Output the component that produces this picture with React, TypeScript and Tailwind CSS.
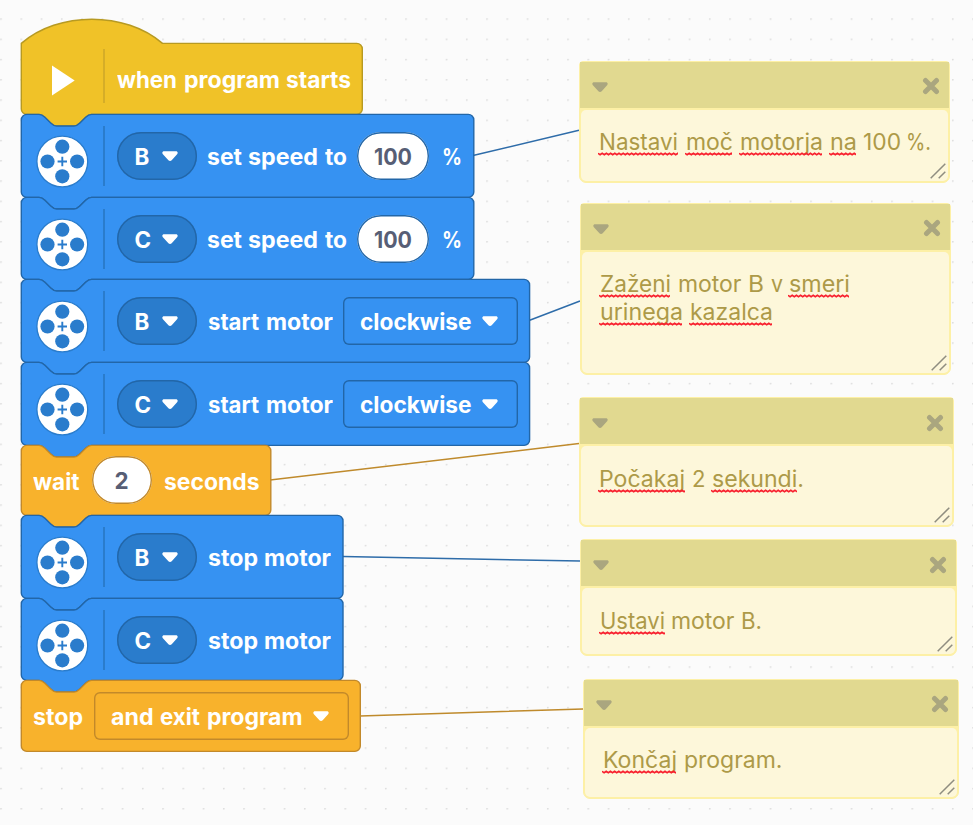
import { useLayoutEffect, useRef, type ReactNode } from "react";

const STEP = 20.25;

type WordSpec = { text: string; width: number; gap?: number; misspelt?: number };

/* A word set to an exact advance width by widening or narrowing its glyphs. */
function Word({ text, width, gap = 0, misspelt }: WordSpec) {
  const ref = useRef<HTMLSpanElement>(null);
  useLayoutEffect(() => {
    const el = ref.current;
    if (!el) return;
    el.style.transform = "none";
    const natural = el.getBoundingClientRect().width;
    el.style.transform = `scaleX(${width / natural})`;
  }, [text, width]);
  return (
    <span className="relative block shrink-0 whitespace-nowrap" style={{ width, marginLeft: gap }}>
      <span ref={ref} className="inline-block origin-left">{text}</span>
      {misspelt ? (
        <svg className="absolute -left-px bottom-0 block" width={misspelt} height="4">
          <path d={squiggle(misspelt)} fill="none" stroke="#f8202e" strokeWidth="1.6" />
        </svg>
      ) : null}
    </span>
  );
}

function squiggle(width: number) {
  let d = "M0 1.3";
  for (let x = 0; x <= width; x += 4.2) d += "l2.1 1.4l2.1 -1.4";
  return d;
}

function Words({ items, className = "" }: { items: WordSpec[]; className?: string }) {
  return (
    <div className={`flex shrink-0 ${className}`}>
      {items.map((w) => <Word key={w.text} {...w} />)}
    </div>
  );
}

const NOTCH = "c2.9 0 4.35 1.45 5.8 2.9l5.8 5.8c1.45 1.45 2.9 2.9 5.8 2.9h17.6c2.9 0 4.35 -1.45 5.8 -2.9l5.8 -5.8c1.45 -1.45 2.9 -2.9 5.8 -2.9";
const TAB = "c-2.9 0 -4.35 1.45 -5.8 2.9l-5.8 5.8c-1.45 1.45 -2.9 2.9 -5.8 2.9h-17.6c-2.9 0 -4.35 -1.45 -5.8 -2.9l-5.8 -5.8c-1.45 -1.45 -2.9 -2.9 -5.8 -2.9";

type Kind = "hat" | "motor" | "control" | "end";

const PAINT: Record<Kind, { fill: string; stroke: string }> = {
  hat: { fill: "#f0c228", stroke: "#b79a22" },
  motor: { fill: "#3692f2", stroke: "#2266a8" },
  control: { fill: "#f8b22c", stroke: "#c2892a" },
  end: { fill: "#f8b22c", stroke: "#c2892a" },
};

function blockPath(kind: Kind, w: number, h: number) {
  const r = 5.5;
  const top = kind === "hat" ? "M0 0c36.7 -32.3 104.3 -32.3 141.2 0" : `M0 ${r}a${r} ${r} 0 0 1 ${r} -${r}H17.8${NOTCH}`;
  const bottom = kind === "end" ? "" : `H70.1${TAB}`;
  return `${top}H${w - r}a${r} ${r} 0 0 1 ${r} ${r}V${h - r}a${r} ${r} 0 0 1 -${r} ${r}${bottom}H${r}a${r} ${r} 0 0 1 -${r} -${r}Z`;
}

function Block({ kind, width, height, className, children }: { kind: Kind; width: number; height: number; className: string; children: ReactNode }) {
  const { fill, stroke } = PAINT[kind];
  return (
    <div className={`relative flex items-center ${className}`}>
      <svg className="absolute left-0 top-0 overflow-visible" width={width} height={height}>
        <path d={blockPath(kind, width, height)} transform="translate(.3 .4)" fill={fill} stroke={stroke} strokeWidth="1.4" />
      </svg>
      {children}
    </div>
  );
}

function Caret({ className }: { className: string }) {
  return (
    <svg className={`shrink-0 ${className}`} width="16" height="11" viewBox="0 0 16 11">
      <path d="M2.2 .3h11.6c1.8 0 2.5 1.6 1.3 2.9L9.7 9.3c-.9 1-2.4 1-3.3 0L.9 3.2C-.3 1.9.4.3 2.2.3Z" fill="currentColor" />
    </svg>
  );
}

function MotorIcon() {
  return (
    <svg className="relative ml-[15px] mt-3 shrink-0" width="53" height="53" viewBox="-26.3 -26.5 53 53">
      <circle r="25.4" fill="#fff" stroke="#2a7ccc" strokeWidth="1.3" />
      <g fill="#2a7ccc">
        <circle cy="-14.8" r="7.1" />
        <circle cy="14.8" r="7.1" />
        <circle cx="-14.8" r="7.1" />
        <circle cx="14.8" r="7.1" />
      </g>
      <path d="M-4.7 0h9.4M0 -4.7v9.4" stroke="#2a7ccc" strokeWidth="1.9" />
    </svg>
  );
}

function PortPill({ port }: { port: string }) {
  return (
    <div className="relative ml-3 flex h-12 w-20 shrink-0 items-center rounded-full bg-[#2a7ccc] pl-[18px] shadow-[inset_0_0_0_1.4px_#2266a8]">
      <span className="mt-0.5 w-[17px]">{port}</span>
      <Caret className="ml-[10px] mt-0.5" />
    </div>
  );
}

function MotorBlock({ port, width, className, height, children }: { port: string; width: number; height: number; className: string; children: ReactNode }) {
  return (
    <Block kind="motor" width={width} height={height} className={className}>
      <MotorIcon />
      <div className="relative ml-[14px] h-[60px] w-[1.5px] shrink-0 bg-[#2a7ccc]" />
      <PortPill port={port} />
      {children}
    </Block>
  );
}

function SpeedParts() {
  return (
    <>
      <Words className="relative ml-[10px] mt-0.5" items={[{ text: "set", width: 35 }, { text: "speed", width: 70, gap: 6 }, { text: "to", width: 22, gap: 7 }]} />
      <div className="relative ml-[10px] flex h-12 w-[72px] shrink-0 items-center justify-center rounded-full bg-white text-[#575e75] shadow-[inset_0_0_0_1.4px_#2266a8]">
        <div className="mt-0.5"><Word text="100" width={38} /></div>
      </div>
      <Words className="relative ml-[13px] mt-0.5" items={[{ text: "%", width: 20 }]} />
    </>
  );
}

function StartParts() {
  return (
    <>
      <Words className="relative ml-[11.5px] mt-0.5" items={[{ text: "start", width: 51 }, { text: "motor", width: 67, gap: 6.5 }]} />
      <div className="relative ml-[10px] flex h-12 w-[175px] shrink-0 items-center rounded-md pl-[17px] shadow-[inset_0_0_0_1.4px_#2266a8]">
        <div className="mt-0.5"><Word text="clockwise" width={111.5} /></div>
        <Caret className="ml-[11px] mt-0.5" />
      </div>
    </>
  );
}

function StopParts() {
  return <Words className="relative ml-[11.5px] mt-0.5" items={[{ text: "stop", width: 50 }, { text: "motor", width: 67, gap: 6 }]} />;
}

type NoteProps = { box: string; lines: WordSpec[][] };

function Note({ box, lines }: NoteProps) {
  return (
    <section className={`absolute flex flex-col rounded-[4px] rounded-b-[7px] border border-[#fdf0a6] bg-[#fdf0a6] ${box}`}>
      <header className="flex h-[46px] shrink-0 items-center justify-between bg-[#e1d990] pl-3 pr-[9px] text-[#aaa67f]">
        <Caret className="mt-[5px]" />
        <svg className="mt-[3px]" width="18" height="18" viewBox="0 0 18 18">
          <path d="M3.5 3.5l11 11M14.5 3.5l-11 11" stroke="currentColor" strokeWidth="5" strokeLinecap="round" />
        </svg>
      </header>
      <div className="relative mx-px mb-px mt-[2px] flex-1 rounded-[5px] bg-[#fdf7da] pl-[18px] pt-[18.6px] font-normal text-[#ad9a48]">
        {lines.map((items, i) => <Words key={i} items={items} />)}
        <svg className="absolute bottom-[2px] right-[2px]" width="16" height="16" viewBox="0 0 16 16">
          <path d="M.7 15.3L15.3 .7M8.7 15.3L15.3 8.7" stroke="#8f8d80" strokeWidth="1.5" />
        </svg>
      </div>
    </section>
  );
}

const NOTES: NoteProps[] = [
  {
    box: "left-[578.6px] top-[60.6px] h-[122px] w-[371px]",
    lines: [[
      { text: "Nastavi", width: 79, misspelt: 80 },
      { text: "moč", width: 47, gap: 8, misspelt: 47 },
      { text: "motorja", width: 83, gap: 7.5, misspelt: 83 },
      { text: "na", width: 27, gap: 7, misspelt: 27 },
      { text: "100", width: 38, gap: 5.5 },
      { text: "%.", width: 25, gap: 5.5 },
    ]],
  },
  {
    box: "left-[580px] top-[202.6px] h-[172px] w-[371px]",
    lines: [
      [
        { text: "Zaženi", width: 71, misspelt: 71 },
        { text: "motor", width: 63.5, gap: 7 },
        { text: "B", width: 16, gap: 6.5 },
        { text: "v", width: 12, gap: 6.5 },
        { text: "smeri", width: 61, gap: 6.5, misspelt: 61 },
      ],
      [
        { text: "urinega", width: 83, misspelt: 83 },
        { text: "kazalca", width: 83, gap: 7, misspelt: 83 },
      ],
    ],
  },
  {
    box: "left-[579px] top-[397px] h-[130px] w-[374.5px]",
    lines: [[
      { text: "Počakaj", width: 86, misspelt: 87 },
      { text: "2", width: 13.5, gap: 6.5 },
      { text: "sekundi.", width: 92, gap: 6.5, misspelt: 86 },
    ]],
  },
  {
    box: "left-[579.6px] top-[539px] h-[117px] w-[377.6px]",
    lines: [[
      { text: "Ustavi", width: 65, misspelt: 66 },
      { text: "motor", width: 63.5, gap: 6.5 },
      { text: "B.", width: 21, gap: 6.5 },
    ]],
  },
  {
    box: "left-[583px] top-[678.6px] h-[120px] w-[376px]",
    lines: [[
      { text: "Končaj", width: 74, misspelt: 74 },
      { text: "program.", width: 98.5, gap: 7 },
    ]],
  },
];

export default function App() {
  return (
    <main className="relative h-[825px] w-[973px] overflow-hidden bg-[#fbfbfb] font-['Inter','Liberation_Sans',sans-serif] text-[22.4px] leading-7 text-white">
      <svg className="absolute inset-0" width="973" height="825">
        <defs>
          <pattern id="grid" x=".2" y="-1.9" width={STEP} height={STEP} patternUnits="userSpaceOnUse">
            <path d="M0 .7h1.6M.8 0v1.5" stroke="#d8d8d8" strokeWidth=".9" />
          </pattern>
        </defs>
        <rect width="973" height="825" fill="url(#grid)" />
        <g fill="none" strokeWidth="1.5">
          <path d="M473 155.5L579 130.3M529 320.5L580 301M343 556.5L580 561" stroke="#2e6ca9" />
          <path d="M270 480L579 443.5M360 716L583 709" stroke="#bf8a2c" />
        </g>
      </svg>

      <div className="absolute left-[21px] top-[43px] flex flex-col items-start font-bold">
        <Block kind="hat" width={341} height={71} className="h-[71px] w-[341px]">
          <svg className="relative ml-[31px] mt-[3px] shrink-0" width="23" height="31" viewBox="0 0 23 31">
            <path d="M0 .5L22.7 15.5 0 30.5Z" fill="#fff" />
          </svg>
          <div className="relative ml-[28px] mt-[-5px] h-[54px] w-[1.5px] shrink-0 bg-[#d5ad28]" />
          <Words className="relative ml-[12.5px] mt-[3px]" items={[{ text: "when", width: 60 }, { text: "program", width: 96, gap: 6.5 }, { text: "starts", width: 65, gap: 6.5 }]} />
        </Block>
        <MotorBlock port="B" width={452.5} height={83} className="h-[83px] w-[453px]"><SpeedParts /></MotorBlock>
        <MotorBlock port="C" width={452.5} height={82} className="h-[82px] w-[453px] pt-px"><SpeedParts /></MotorBlock>
        <MotorBlock port="B" width={508.3} height={83} className="h-[83px] w-[509px]"><StartParts /></MotorBlock>
        <MotorBlock port="C" width={508.3} height={83} className="h-[83px] w-[509px]"><StartParts /></MotorBlock>
        <Block kind="control" width={249.5} height={70} className="h-[70px] w-[250px]">
          <Words className="relative ml-3 mt-1" items={[{ text: "wait", width: 46.5 }]} />
          <div className="relative ml-3 flex h-12 w-[60px] shrink-0 items-center justify-center rounded-full bg-white text-[#575e75] shadow-[inset_0_0_0_1.4px_#c2892a]"><span className="mt-0.5">2</span></div>
          <Words className="relative ml-3 mt-1" items={[{ text: "seconds", width: 95.5 }]} />
        </Block>
        <MotorBlock port="B" width={321.7} height={83} className="h-[83px] w-[322px]"><StopParts /></MotorBlock>
        <MotorBlock port="C" width={321.7} height={82} className="h-[82px] w-[322px] pt-px"><StopParts /></MotorBlock>
        <Block kind="end" width={339} height={71} className="h-[71px] w-[339px]">
          <Words className="relative ml-3 mt-[3px]" items={[{ text: "stop", width: 50 }]} />
          <div className="relative ml-[11px] flex h-12 w-[255px] shrink-0 items-center rounded-md pl-[17px] shadow-[inset_0_0_0_1.4px_#c2892a]">
            <Words className="mt-0.5" items={[{ text: "and", width: 42.5 }, { text: "exit", width: 40, gap: 6.5 }, { text: "program", width: 95.5, gap: 6.5 }]} />
            <Caret className="ml-[11px] mt-0.5" />
          </div>
        </Block>
      </div>

      {NOTES.map((note) => <Note key={note.box} {...note} />)}
    </main>
  );
}
